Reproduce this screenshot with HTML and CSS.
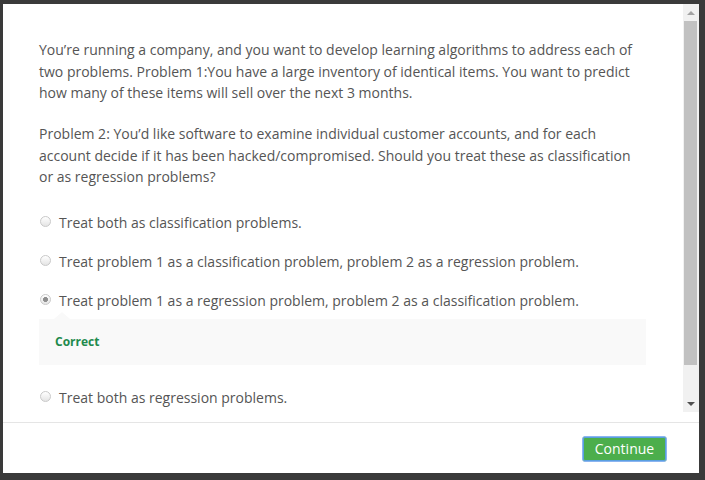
FILE: index.html
```html
<!DOCTYPE html>
<html lang="en">
<head>
<meta charset="utf-8">
<title>Quiz</title>
<link rel="stylesheet" href="styles.css">
</head>
<body>
<div class="modal">
  <div class="modal-scroll">
    <div class="modal-body">
      <div class="question">
        <p>You’re running a company, and you want to develop learning algorithms to address each of two problems. Problem 1:You have a large inventory of identical items. You want to predict how many of these items will sell over the next 3 months.</p>
        <p>Problem 2: You’d like software to examine individual customer accounts, and for each account decide if it has been hacked/compromised. Should you treat these as classification or as regression problems?</p>
      </div>
      <div class="options">
        <label class="option"><span class="radio"></span>Treat both as classification problems.</label>
        <label class="option"><span class="radio"></span>Treat problem 1 as a classification problem, problem 2 as a regression problem.</label>
        <div class="option-group">
          <label class="option"><span class="radio checked"></span>Treat problem 1 as a regression problem, problem 2 as a classification problem.</label>
          <div class="feedback"><span class="correct">Correct</span></div>
        </div>
        <label class="option"><span class="radio"></span>Treat both as regression problems.</label>
      </div>
    </div>
    <div class="scrollbar">
      <div class="sb-arrow sb-up"></div>
      <div class="sb-track"><div class="sb-thumb"></div></div>
      <div class="sb-arrow sb-down"></div>
    </div>
  </div>
  <div class="modal-footer">
    <button class="btn-continue">Continue</button>
  </div>
</div>
</body>
</html>
```

FILE: styles.css
```css
html, body {
  margin: 0;
  padding: 0;
}
body {
  background: #3a3a3a;
  width: 705px;
  height: 480px;
  overflow: hidden;
  font-family: "Open Sans", "Noto Sans", sans-serif;
  font-size: 14px;
  line-height: 21.5px;
  color: #555;
}
.modal {
  margin: 4px 0 0 3px;
  width: 696px;
  height: 469px;
  background: #fff;
  display: flex;
  flex-direction: column;
}
.modal-scroll {
  height: 408px;
  flex: none;
  display: flex;
}
.modal-body {
  flex: 1;
  min-width: 0;
  overflow: hidden;
  padding: 35px 37px 0 36px;
}
.scrollbar {
  width: 16px;
  flex: none;
  background: #f1f1f1;
  display: flex;
  flex-direction: column;
}
.sb-arrow {
  height: 17px;
  flex: none;
  display: flex;
  align-items: center;
  justify-content: center;
}
.sb-arrow::before {
  content: "";
  border-left: 4px solid transparent;
  border-right: 4px solid transparent;
}
.sb-up::before {
  border-bottom: 4px solid #a3a3a3;
}
.sb-down::before {
  border-top: 4px solid #505050;
}
.sb-track {
  flex: 1;
  padding: 0 2px 0 1px;
}
.sb-thumb {
  height: 344px;
  background: #c1c1c1;
}
.question p {
  margin: 0 0 19.5px;
}
.question p:last-child {
  margin-bottom: 0;
}
.options {
  margin-top: 24.5px;
  display: flex;
  flex-direction: column;
  gap: 17.5px;
}
.option {
  display: flex;
  align-items: center;
}
.radio {
  width: 11px;
  height: 11px;
  border-radius: 50%;
  border: 1px solid #c9c9c9;
  background: linear-gradient(#ffffff, #e4e4e4);
  box-sizing: border-box;
  margin: 0 8px 0 1px;
  flex: none;
  position: relative;
  top: -1px;
}
.radio.checked {
  background: radial-gradient(circle, #8f8f8f 0 2.2px, transparent 2.8px), linear-gradient(#ffffff, #e4e4e4);
}
.option-group {
  display: flex;
  flex-direction: column;
}
.feedback {
  margin-top: 7px;
  height: 46px;
  background: #f9f9f9;
  display: flex;
  align-items: center;
  padding-left: 16px;
  position: relative;
  margin-bottom: 4.5px;
}
.feedback::before {
  content: "";
  position: absolute;
  left: 15px;
  top: -7px;
  border-left: 8px solid transparent;
  border-right: 8px solid transparent;
  border-bottom: 7px solid #f9f9f9;
}
.correct {
  color: #218a4c;
  font-weight: 700;
  font-size: 12px;
}
.modal-footer {
  margin-top: 10px;
  border-top: 1px solid #e5e5e5;
  flex: 1;
  display: flex;
  justify-content: flex-end;
  align-items: flex-start;
  padding: 13px 32px 0 0;
}
.btn-continue {
  font-family: "Open Sans", "Noto Sans", sans-serif;
  font-size: 14px;
  color: #fff;
  background: #4cae4c;
  border: 1px solid #8ab4f0;
  box-shadow: inset 0 0 0 1px #5a9fe0;
  border-radius: 3px;
  width: 85px;
  height: 26px;
  padding: 0;
  line-height: 22px;
}
```
